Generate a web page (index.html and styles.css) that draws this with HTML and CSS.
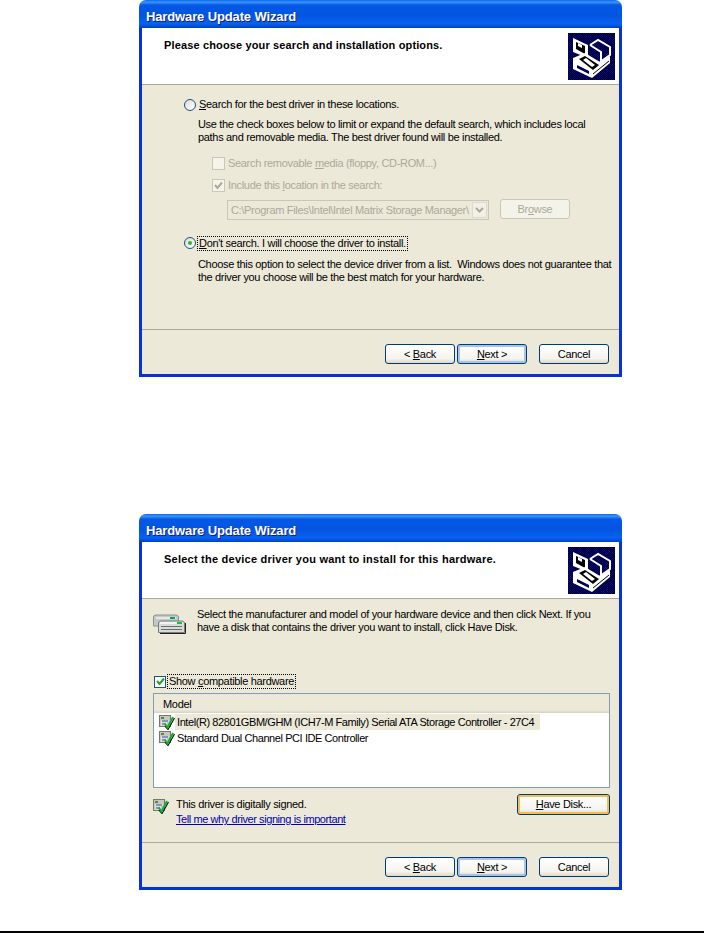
FILE: index.html
```html
<!DOCTYPE html>
<html lang="en">
<head>
  <meta charset="UTF-8" />
  <title>Hardware Update Wizard</title>
  <link rel="stylesheet" href="styles.css">
</head>
<body>

  <svg class="defs" width="0" height="0">
    <defs>
      <pattern id="dither" width="2" height="2" patternUnits="userSpaceOnUse">
        <rect width="2" height="2" fill="#0000a0" />
        <rect width="1" height="1" fill="#000" />
        <rect x="1" y="1" width="1" height="1" fill="#000" />
      </pattern>
      <symbol id="wizard-icon" viewBox="0 0 47 47">
        <rect width="47" height="47" fill="url(#dither)" />
        <!-- drive bay: two flaps over the open tray -->
        <path d="M5 5 L20 12 L20 25 L5 19 Z" fill="#fff" />
        <path d="M8 9 L17 13 L17 21 L8 16 Z" fill="#000" />
        <path d="M10 10 L14 12 L14 15 L10 13 Z" fill="#fff" />
        <path d="M22 12 L30 7 L42 14 L42 22 L32 29" fill="url(#dither)" stroke="#fff" stroke-width="2" />
        <path d="M22 12 L33 19 L33 28" fill="none" stroke="#fff" stroke-width="2" />
        <path d="M5 25 L17 20 L32 29 L42 23 L42 30 L24 45 L5 36 Z" fill="#fff" />
        <path d="M11 26 L17 23 L31 32 L25 37 Z" fill="#000" />
        <path d="M15 27 L18 25 L27 32 L24 34 Z" fill="#fff" />
        <path d="M9 32 L21 38 L21 41 L9 35 Z" fill="url(#dither)" />
        <path d="M25 41 L41 28" stroke="#000" stroke-width="1" fill="none" />
      </symbol>
      <symbol id="driver-icon" viewBox="0 0 16 16">
        <rect x="0.500" y="1.500" width="11" height="11" fill="#c8c8bc" stroke="#77776c" />
        <rect x="2" y="3" width="3" height="2" fill="#4a8a4a" />
        <path d="M2 7 H10 M2 9 H8 M2 11 H6" stroke="#f4f4f4" stroke-width="1" />
        <path d="M3 7 H9 M3 10 H7" stroke="#3a4a9a" stroke-width="1" />
        <path d="M6 12 L9 15.500 L15.500 4" stroke="#111" stroke-width="1.200" fill="none" />
        <path d="M5.500 9.500 L8.500 13.500 L14 3" stroke="#10b030" stroke-width="2" fill="none" />
      </symbol>
    </defs>
  </svg>

  <div class="dialog">
    <div class="titlebar">Hardware Update Wizard</div>
    <div class="frame">
      <div class="header">
        <div class="header-title">Please choose your search and installation options.</div>
        <svg class="wizard-icon"><use href="#wizard-icon" /></svg>
      </div>
      <div class="content options">
        <div class="choice">
          <span class="radio"></span>
          <span class="label plain"><u>S</u>earch for the best driver in these locations.</span>
        </div>
        <div class="desc">Use the check boxes below to limit or expand the default search, which includes local<br>paths and removable media. The best driver found will be installed.</div>
        <div class="check-row first disabled">
          <span class="checkbox"></span>
          <span>Search removable <u>m</u>edia (floppy, CD-ROM...)</span>
        </div>
        <div class="check-row disabled">
          <span class="checkbox">
            <svg width="13" height="13" viewBox="0 0 13 13"><path d="M3 6 L5.500 9 L10 3.500" stroke="#aca899" stroke-width="2" fill="none" /></svg>
          </span>
          <span>Include this <u>l</u>ocation in the search:</span>
        </div>
        <div class="path-row">
          <div class="combo">
            <span class="combo-text">C:\Program Files\Intel\Intel Matrix Storage Manager\</span>
            <span class="combo-arrow">
              <svg width="9" height="6" viewBox="0 0 9 6"><path d="M1 1 L4.500 4.500 L8 1" stroke="#aca899" stroke-width="2" fill="none" /></svg>
            </span>
          </div>
          <div class="btn btn-disabled">Br<u>o</u>wse</div>
        </div>
        <div class="choice second">
          <span class="radio on"></span>
          <span class="label focus"><u>D</u>on't search. I will choose the driver to install.</span>
        </div>
        <div class="desc close">Choose this option to select the device driver from a list.&nbsp; Windows does not guarantee that<br>the driver you choose will be the best match for your hardware.</div>
      </div>
      <div class="footer">
        <div class="btn">&lt; <u>B</u>ack</div>
        <div class="btn btn-default"><u>N</u>ext &gt;</div>
        <div class="btn cancel">Cancel</div>
      </div>
    </div>
  </div>

  <div class="dialog dialog-second">
    <div class="titlebar">Hardware Update Wizard</div>
    <div class="frame">
      <div class="header">
        <div class="header-title wide">Select the device driver you want to install for this hardware.</div>
        <svg class="wizard-icon"><use href="#wizard-icon" /></svg>
      </div>
      <div class="content models">
        <div class="intro">
          <svg class="hw-icon" width="33" height="20" viewBox="0 0 33 20">
            <path d="M0.500 3 Q0.500 1 3 1 H23 Q25 1 25.500 3 V12 H0.500 Z" fill="#c4c8c6" stroke="#8c908e" />
            <rect x="3" y="3" width="20" height="2" fill="#e6e8e6" />
            <rect x="17" y="3" width="5" height="2" fill="#00a858" />
            <path d="M5.500 9 Q5.500 7 8 7 H29 Q31 7 31.500 9 V18.500 H5.500 Z" fill="#d8dad8" stroke="#787c7a" />
            <rect x="7" y="8" width="23" height="2" fill="#f2f4f2" />
            <rect x="24" y="8" width="5" height="2" fill="#00c848" />
            <path d="M8 12.500 H29 M8 15.500 H29" stroke="#6c706e" />
            <path d="M32.500 9 V19.500 H7" stroke="#222" fill="none" />
          </svg>
          <div>Select the manufacturer and model of your hardware device and then click Next. If you<br>have a disk that contains the driver you want to install, click Have Disk.</div>
        </div>
        <div class="compat">
          <span class="checkbox active">
            <svg width="11" height="11" viewBox="0 0 11 11"><path d="M2 5 L4.500 8 L9 2.500" stroke="#21a121" stroke-width="2" fill="none" /></svg>
          </span>
          <span class="label focus">Show <u>c</u>ompatible hardware</span>
        </div>
        <div class="listbox">
          <div class="list-head">Model</div>
          <div class="list-row selected">
            <svg class="row-icon"><use href="#driver-icon" /></svg>
            <span class="row-text">Intel(R) 82801GBM/GHM (ICH7-M Family) Serial ATA Storage Controller - 27C4</span>
          </div>
          <div class="list-row">
            <svg class="row-icon"><use href="#driver-icon" /></svg>
            <span class="row-text">Standard Dual Channel PCI IDE Controller</span>
          </div>
        </div>
        <div class="signed">
          <svg class="row-icon"><use href="#driver-icon" /></svg>
          <div class="signed-text">
            <div>This driver is digitally signed.</div>
            <a class="signed-link" href="#">Tell me why driver signing is important</a>
          </div>
          <div class="btn btn-hot"><u>H</u>ave Disk...</div>
        </div>
      </div>
      <div class="footer">
        <div class="btn">&lt; <u>B</u>ack</div>
        <div class="btn btn-default"><u>N</u>ext &gt;</div>
        <div class="btn cancel">Cancel</div>
      </div>
    </div>
  </div>

  <div class="page-rule"></div>

</body>
</html>
```

FILE: styles.css
```css
:root {
  --xp-face: #ece9d8;
  --xp-blue: #0831d9;
  --xp-btn: #003c74;
  --xp-muted: #aca899;
}

body {
  margin: 0;
  background: #fff;
  color: #000;
  font-family: "Liberation Sans", Arial, sans-serif;
  font-size: 11px;
  line-height: 13px;
  letter-spacing: -0.320px;
  overflow: hidden;
}

.defs {
  display: block;
  height: 0;
}

u {
  text-underline-offset: 1px;
}

.dialog {
  width: 483px;
  height: 377px;
  margin-left: 139px;
  display: flex;
  flex-direction: column;
}

.dialog-second {
  height: 376px;
  margin-top: 137px;
}

.titlebar {
  height: 28px;
  flex: none;
  box-sizing: border-box;
  padding: 9px 0 0 7px;
  border-radius: 7px 7px 0 0;
  background: linear-gradient(to bottom, #0a6af0 0%, #3a93ff 8%, #0458e4 18%, #0355e0 55%, #0861f0 85%, #0040c8 100%);
  color: #fff;
  font-size: 13px;
  font-weight: bold;
  line-height: 15px;
  letter-spacing: -0.130px;
  text-shadow: 1px 1px 0 #0f1f80;
  white-space: nowrap;
}

.frame {
  flex: 1;
  display: flex;
  flex-direction: column;
  border: solid var(--xp-blue);
  border-width: 0 3px 3px;
  background: var(--xp-face);
}

.header {
  height: 57px;
  flex: none;
  box-sizing: border-box;
  display: flex;
  justify-content: space-between;
  padding: 5px 4px 0 22px;
  background: #fff;
  border-bottom: 1px solid #aca899;
}

.header-title {
  padding-top: 6px;
  font-weight: bold;
  letter-spacing: 0.140px;
}

.header-title.wide {
  letter-spacing: 0.235px;
}

.wizard-icon {
  width: 47px;
  height: 47px;
}

.content {
  flex: 1;
}

.options {
  padding: 13px 0 0 42px;
}

.choice {
  height: 13px;
  display: flex;
  align-items: center;
  gap: 2px;
}

.choice.second {
  margin-top: 16px;
  height: 14px;
}

.radio {
  width: 12px;
  height: 12px;
  flex: none;
  box-sizing: border-box;
  display: flex;
  align-items: center;
  justify-content: center;
  border: 1px solid #1c5180;
  border-radius: 50%;
  background: linear-gradient(135deg, #dcdcd7, #fff);
}

.radio.on::after {
  content: "";
  width: 4px;
  height: 4px;
  border-radius: 50%;
  background: #2fb52f;
}

.label {
  white-space: nowrap;
}

.label.plain {
  padding-left: 1px;
}

.focus {
  outline: 1px dotted #000;
  outline-offset: 0;
  padding: 0 1px;
}

.desc {
  margin: 7px 0 0 14px;
  white-space: nowrap;
}

.desc.close {
  margin-top: 8px;
}

.check-row {
  height: 13px;
  margin: 9px 0 0 28px;
  display: flex;
  align-items: center;
  gap: 3px;
  white-space: nowrap;
}

.check-row.first {
  margin-top: 13px;
}

.disabled {
  color: var(--xp-muted);
}

.checkbox {
  width: 13px;
  height: 13px;
  flex: none;
  box-sizing: border-box;
  display: flex;
  align-items: center;
  justify-content: center;
  border: 1px solid #c9c7ba;
  background: #fff;
}

.disabled .checkbox {
  background: #f6f4ea;
}

.checkbox svg {
  flex: none;
}

.checkbox.active {
  border-color: #1c5180;
}

.path-row {
  margin: 8px 0 0 43px;
  display: flex;
  align-items: flex-start;
  gap: 11px;
}

.combo {
  width: 262px;
  height: 20px;
  box-sizing: border-box;
  display: flex;
  align-items: center;
  justify-content: space-between;
  padding: 1px;
  border: 1px solid #c9c7ba;
  color: var(--xp-muted);
  background: var(--xp-face);
  white-space: nowrap;
}

.combo-text {
  padding-left: 2px;
}

.combo-arrow {
  width: 15px;
  height: 16px;
  flex: none;
  display: flex;
  align-items: center;
  justify-content: center;
  border: 1px solid #dcdacb;
  box-sizing: border-box;
  background: #f2f0e6;
}

.btn {
  width: 70px;
  height: 20px;
  flex: none;
  box-sizing: border-box;
  border: 1px solid var(--xp-btn);
  border-radius: 3px;
  background: linear-gradient(to bottom, #fff 0%, #f5f4ee 75%, #dcd8ca 100%);
  line-height: 18px;
  text-align: center;
  white-space: nowrap;
}

.btn-disabled {
  margin-top: -1px;
  color: var(--xp-muted);
  border-color: #c9c7ba;
  background: #f4f3ea;
}

.btn-default {
  box-shadow: inset 0 0 0 2px #a8c4ec;
}

.btn-hot {
  width: 93px;
  height: 21px;
  margin-left: auto;
  line-height: 19px;
  box-shadow: inset 0 0 0 2px #f4bd50;
}

.footer {
  flex: none;
  display: flex;
  padding: 14px 10px 10px 0;
  justify-content: flex-end;
  gap: 2px;
  border-top: 1px solid #aca899;
}

.cancel {
  margin-left: 10px;
}

.models {
  padding: 9px 9px 0 11px;
}

.intro {
  display: flex;
  gap: 11px;
  white-space: nowrap;
}

.hw-icon {
  flex: none;
  margin-top: 6px;
}

.compat {
  height: 13px;
  margin: 41px 0 0 1px;
  display: flex;
  align-items: center;
  gap: 2px;
}

.compat .checkbox {
  width: 12px;
  height: 12px;
}

.listbox {
  height: 95px;
  margin-top: 5px;
  box-sizing: border-box;
  border: 1px solid #7f9db9;
  background: #fff;
}

.list-head {
  height: 19px;
  box-sizing: border-box;
  padding: 4px 0 0 9px;
  background: linear-gradient(to bottom, var(--xp-face) 85%, #d6d2c2 100%);
}

.list-row {
  height: 16px;
  display: flex;
  padding-left: 5px;
  letter-spacing: -0.420px;
}

.row-icon {
  width: 16px;
  height: 16px;
  flex: none;
}

.row-text {
  padding-left: 2px;
  line-height: 16px;
  white-space: nowrap;
}

.list-row.selected {
  margin-top: 1px;
}

.list-row.selected .row-text {
  width: 365px;
  box-sizing: border-box;
  background: var(--xp-face);
}

.signed {
  margin-top: 6px;
  display: flex;
  align-items: flex-start;
}

.signed .row-icon {
  margin-top: 4px;
}

.signed-text {
  padding: 4px 0 0 7px;
  white-space: nowrap;
}

.signed-link {
  display: block;
  margin-top: 2px;
  color: #0000b0;
  letter-spacing: -0.420px;
}

.page-rule {
  height: 2px;
  margin-top: 41px;
  background: #000;
}
```
